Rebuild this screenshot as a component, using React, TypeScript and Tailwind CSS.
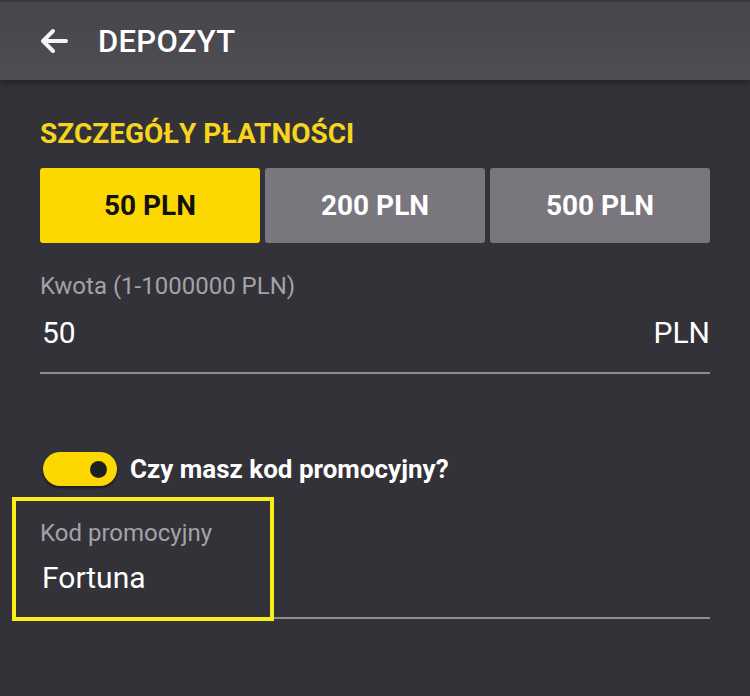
import React, { useState } from 'react';

const AMOUNTS = [50, 200, 500];

const App: React.FC = () => {
  const [amount, setAmount] = useState(50);
  const [promo, setPromo] = useState(true);

  return (
    <div className="w-[750px] h-[696px] bg-[#333238] text-white flex flex-col overflow-hidden" style={{ fontFamily: 'Roboto, "Noto Sans", sans-serif' }}>
      {/* Header */}
      <header className="h-20 shrink-0 bg-gradient-to-b from-[#46454b] to-[#4f4e54] border-t-2 border-[#3a393e] flex items-center px-10 gap-[30px] shadow-[0_3px_6px_rgba(0,0,0,0.35)] z-10">
        <svg width="28" height="26" viewBox="0 0 28 26" fill="none" stroke="#f4f4f4" strokeWidth="4" strokeLinecap="round" strokeLinejoin="round">
          <path d="M26 13H4" />
          <path d="M13 3L3 13l10 10" />
        </svg>
        <h1 className="text-[31px] font-medium tracking-[0.3px] leading-none">DEPOZYT</h1>
      </header>

      <main className="flex-1 px-10 pt-[40px] relative">
        <h2 className="text-[28px] font-bold text-[#f7d51d] leading-none">SZCZEGÓŁY PŁATNOŚCI</h2>

        <div className="mt-[20px] flex gap-[5px]">
          {AMOUNTS.map(a => (
            <button
              key={a}
              onClick={() => setAmount(a)}
              className={`flex-1 h-[75px] rounded-[3px] text-[28px] font-bold ${
                amount === a ? 'bg-[#fcd800] text-[#111]' : 'bg-[#79777d] text-white'
              }`}
            >
              {a} PLN
            </button>
          ))}
        </div>

        {/* Amount field */}
        <div className="mt-[31px]">
          <p className="text-[24px] text-[#a3a2a7] leading-none">Kwota (1-1000000 PLN)</p>
          <div className="mt-[19px] flex items-center justify-between pb-[23px] border-b-2 border-[#8d8c91]">
            <span className="text-[30px] leading-[32px] pl-[2px]">{amount}</span>
            <span className="text-[30px] leading-[32px]">PLN</span>
          </div>
        </div>

        {/* Promo toggle */}
        <div className="mt-[78px] flex items-center gap-[13px]">
          <button
            onClick={() => setPromo(!promo)}
            className="ml-[3px] w-[74px] h-[34px] rounded-full bg-[#fcd800] flex items-center justify-end pr-[10px] shadow-[0_2px_3px_rgba(0,0,0,0.5)]"
          >
            <span className="w-[17px] h-[17px] rounded-full bg-[#1f1e22]" />
          </button>
          <span className="text-[26px] font-bold leading-none">Czy masz kod promocyjny?</span>
        </div>

        {/* Promo code field */}
        <div className="mt-[35px] pb-[23px] border-b-2 border-[#8d8c91]">
          <p className="text-[24px] text-[#a3a2a7] leading-none">Kod promocyjny</p>
          <p className="mt-[17px] text-[30px] leading-[32px] pl-[2px]">Fortuna</p>
        </div>

        {/* highlight annotation */}
        <div className="absolute left-[12px] top-[417px] w-[262px] h-[124px] border-4 border-[#f9ee1a] pointer-events-none" />
      </main>
    </div>
  );
};

export default App;
